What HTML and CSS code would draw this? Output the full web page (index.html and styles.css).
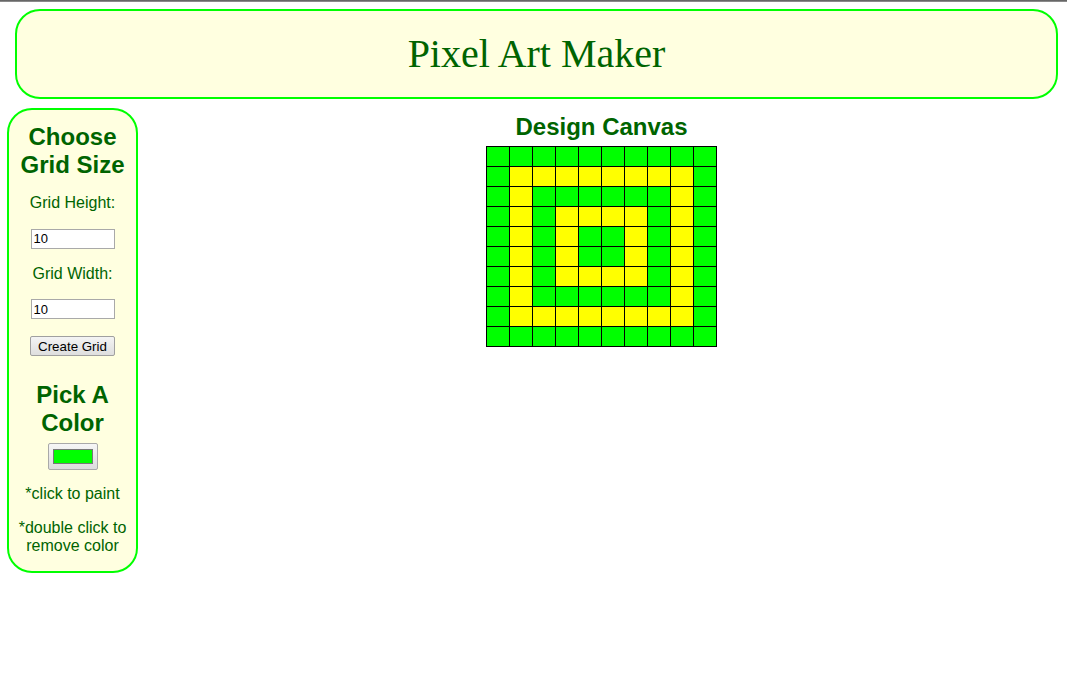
FILE: index.html
```html
<!DOCTYPE html>
<html lang="en">
<head>
<meta charset="utf-8">
<title>Pixel Art Maker</title>
<link rel="stylesheet" href="styles.css">
</head>
<body>
<div class="topline"></div>
<header class="banner">
  <h1 class="title">Pixel Art Maker</h1>
</header>
<div class="layout">
  <aside class="panel">
    <h2 class="panel-heading">Choose Grid Size</h2>
    <p class="label">Grid Height:</p>
    <input class="num" type="text" value="10">
    <p class="label">Grid Width:</p>
    <input class="num" type="text" value="10">
    <button class="btn" type="button">Create Grid</button>
    <h2 class="panel-heading pick">Pick A Color</h2>
    <div class="color-btn"><span class="swatch"></span></div>
    <p class="note first">*click to paint</p>
    <p class="note">*double click to remove color</p>
  </aside>
  <main class="main">
    <h2 class="canvas-heading">Design Canvas</h2>
    <table class="canvas">
      <tr><td class="g"></td><td class="g"></td><td class="g"></td><td class="g"></td><td class="g"></td><td class="g"></td><td class="g"></td><td class="g"></td><td class="g"></td><td class="g"></td></tr>
      <tr><td class="g"></td><td class="y"></td><td class="y"></td><td class="y"></td><td class="y"></td><td class="y"></td><td class="y"></td><td class="y"></td><td class="y"></td><td class="g"></td></tr>
      <tr><td class="g"></td><td class="y"></td><td class="g"></td><td class="g"></td><td class="g"></td><td class="g"></td><td class="g"></td><td class="g"></td><td class="y"></td><td class="g"></td></tr>
      <tr><td class="g"></td><td class="y"></td><td class="g"></td><td class="y"></td><td class="y"></td><td class="y"></td><td class="y"></td><td class="g"></td><td class="y"></td><td class="g"></td></tr>
      <tr><td class="g"></td><td class="y"></td><td class="g"></td><td class="y"></td><td class="g"></td><td class="g"></td><td class="y"></td><td class="g"></td><td class="y"></td><td class="g"></td></tr>
      <tr><td class="g"></td><td class="y"></td><td class="g"></td><td class="y"></td><td class="g"></td><td class="g"></td><td class="y"></td><td class="g"></td><td class="y"></td><td class="g"></td></tr>
      <tr><td class="g"></td><td class="y"></td><td class="g"></td><td class="y"></td><td class="y"></td><td class="y"></td><td class="y"></td><td class="g"></td><td class="y"></td><td class="g"></td></tr>
      <tr><td class="g"></td><td class="y"></td><td class="g"></td><td class="g"></td><td class="g"></td><td class="g"></td><td class="g"></td><td class="g"></td><td class="y"></td><td class="g"></td></tr>
      <tr><td class="g"></td><td class="y"></td><td class="y"></td><td class="y"></td><td class="y"></td><td class="y"></td><td class="y"></td><td class="y"></td><td class="y"></td><td class="g"></td></tr>
      <tr><td class="g"></td><td class="g"></td><td class="g"></td><td class="g"></td><td class="g"></td><td class="g"></td><td class="g"></td><td class="g"></td><td class="g"></td><td class="g"></td></tr>
    </table>
  </main>
</div>
</body>
</html>
```

FILE: styles.css
```css
html, body {
  margin: 0;
  padding: 0;
  background: #ffffff;
}

body {
  font-family: "Liberation Sans", Arial, sans-serif;
  color: #006400;
}

.topline {
  height: 2px;
  background: linear-gradient(#555555, #9a9a9a);
}

.banner {
  margin: 7px 9px 0 15px;
  height: 90px;
  box-sizing: border-box;
  border: 2px solid #00ff00;
  border-radius: 25px;
  background: #ffffe0;
  padding: 20px 0;
  text-align: center;
}

.title {
  margin: 0;
  font-family: "Liberation Serif", "Times New Roman", serif;
  font-weight: normal;
  font-size: 40px;
  line-height: 46px;
  color: #006400;
}

.layout {
  display: flex;
  align-items: flex-start;
  margin-top: 9px;
}

.panel {
  margin-left: 7px;
  width: 131px;
  box-sizing: border-box;
  border: 2px solid #00ff00;
  border-radius: 25px;
  background: #ffffe0;
  padding: 13px 6px 16px;
  display: flex;
  flex-direction: column;
  align-items: center;
  text-align: center;
}

.panel-heading {
  margin: 0 0 16px;
  font-size: 24px;
  line-height: 27.6px;
  font-weight: bold;
  color: #006400;
}

.panel-heading.pick {
  margin: 25px 0 7px;
}

.label {
  margin: 0 0 16px;
  font-size: 16px;
  line-height: 18.4px;
}

.num {
  width: 84px;
  height: 20px;
  box-sizing: border-box;
  border: 1px solid #a9a9a9;
  padding: 0 2px;
  margin: 0 0 16px;
  font-family: "Liberation Sans", Arial, sans-serif;
  font-size: 13px;
  color: #000000;
  background: #ffffff;
}

.btn {
  width: 85px;
  height: 20px;
  box-sizing: border-box;
  margin: 1px 0 0;
  padding: 0;
  border: 1px solid #a0a0a0;
  border-radius: 2px;
  background: linear-gradient(#f4f4f4, #dedede);
  font-family: "Liberation Sans", Arial, sans-serif;
  font-size: 13.33px;
  color: #000000;
}

.color-btn {
  width: 50px;
  height: 27px;
  box-sizing: border-box;
  border: 1px solid #a9a9a9;
  border-radius: 2px;
  background: linear-gradient(#f6f6f6, #dddddd);
  display: flex;
  align-items: center;
  justify-content: center;
}

.swatch {
  display: block;
  width: 40px;
  height: 15px;
  box-sizing: border-box;
  border: 1px solid #777777;
  background: #00ff00;
}

.note {
  margin: 15px 0 0;
  font-size: 16px;
  line-height: 18.4px;
}

.note.first {
  margin-top: 15px;
}

.main {
  flex: 1;
  display: flex;
  flex-direction: column;
  align-items: center;
  padding-right: 2px;
}

.canvas-heading {
  margin: 4.5px 0 6px;
  font-size: 24px;
  line-height: 27.6px;
  font-weight: bold;
  color: #006400;
}

.canvas {
  border-collapse: collapse;
  border: 1px solid #000000;
}

.canvas td {
  width: 22px;
  height: 19px;
  padding: 0;
  border: 1px solid #000000;
}

.canvas td.g {
  background: #00ff00;
}

.canvas td.y {
  background: #ffff00;
}
```
